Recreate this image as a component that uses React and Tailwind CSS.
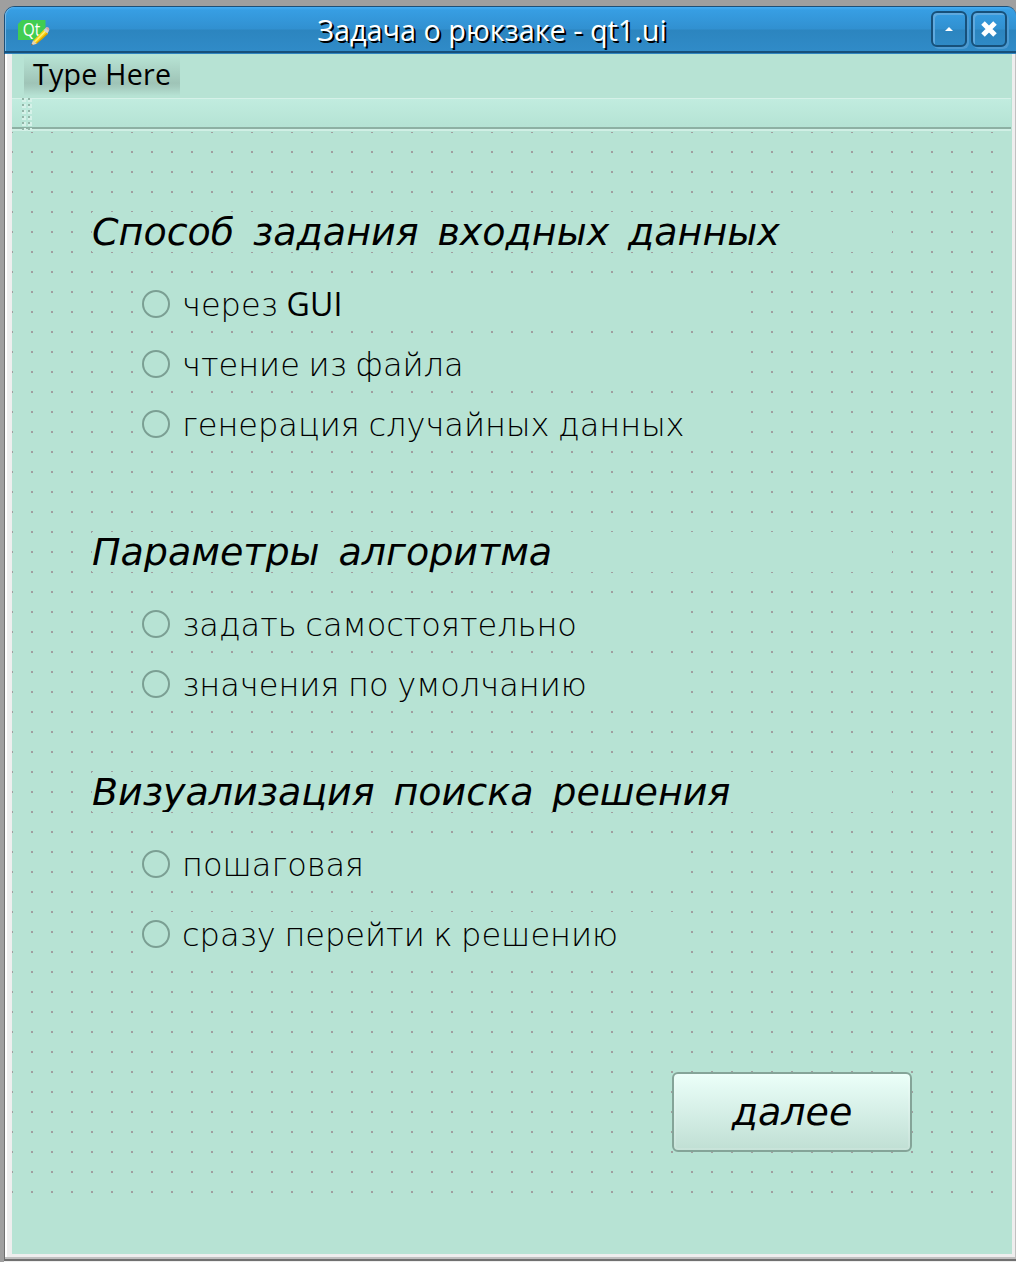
import React from "react";

const sections = [
  {
    title: "Способ задания входных данных",
    space: "mb-[86px]",
    options: [
      { label: "через ", latin: "GUI" },
      { label: "чтение из файла" },
      { label: "генерация случайных данных" },
    ],
    width: "w-[600px]",
    gap: "gap-4",
  },
  {
    title: "Параметры алгоритма",
    space: "mb-[66px]",
    options: [{ label: "задать самостоятельно" }, { label: "значения по умолчанию" }],
    width: "w-[540px]",
    gap: "gap-4",
  },
  {
    title: "Визуализация поиска решения",
    space: "mb-[116px]",
    options: [{ label: "пошаговая" }, { label: "сразу перейти к решению", shift: "-ml-px" }],
    width: "w-[540px]",
    gap: "gap-[26px]",
  },
];

function QtIcon() {
  return (
    <svg width="32" height="28" viewBox="0 0 32 28" className="block">
      <path d="M4 1H27.5V17L23.5 21H0V5Z" fill="#41cd52" />
      <text x="4.8" y="16.6" fontFamily="'Open Sans', sans-serif" fontSize="17.5" fontWeight="500" fill="#fff" textLength="17.5" lengthAdjust="spacingAndGlyphs">
        Qt
      </text>
      <path d="M15 22L26 10.5L30 14.5L18.5 24.5Z" fill="#f7d417" />
      <path d="M16 22.8L27 11.5L28 12.5L17 23.6Z" fill="#fff27a" />
      <path d="M17.6 24.4L29 13.8L30 14.8L18.6 25Z" fill="#e09b00" />
      <path d="M15 21.6L13 26.5L18.8 24.8Z" fill="#e9d3ae" />
      <path d="M13.7 24.7L13 26.5L14.9 26Z" fill="#444" />
      <path d="M25.6 11L28.4 8.2Q30.2 8 31 9.4Q31.6 10.8 30.9 12L29.4 14.6Z" fill="#cfcfcf" />
      <path d="M27.8 8.8Q30 7.6 31 9.4Q31.6 10.8 30.6 12Z" fill="#d9a3a3" />
    </svg>
  );
}

function TitleButton({ children }) {
  return (
    <button className="flex size-9 items-center justify-center rounded-md border-2 border-[#17507a] shadow-[2px_2px_0_#4c9ad2,inset_2px_2px_0_#5fa9de]">
      {children}
    </button>
  );
}

function Radio({ option }) {
  return (
    <label className="flex h-11 items-center bg-[#b7e3d4]">
      <span className="size-7 shrink-0 rounded-full border-2 border-[#7b9f93]" />
      <span
        className={`ml-3 h-11 whitespace-pre font-['DejaVu_Sans',sans-serif] text-[32px] font-extralight [word-spacing:-1.5px] ${option.latin ? "leading-11" : "leading-[46px]"} ${option.shift || ""}`}
      >
        {option.label}
        {option.latin && (
          <span className="font-['Open_Sans',sans-serif] font-normal tracking-[0.2px]">{option.latin}</span>
        )}
      </span>
    </label>
  );
}

export default function App() {
  return (
    <div className="flex h-[1262px] w-[1016px] flex-col overflow-hidden bg-[#9f9f9f] pt-1.5 pl-1 text-black">
      <header className="flex h-12 shrink-0 rounded-tl-[11px] rounded-tr-[9px] border-t border-l border-[#1d4f77] bg-[#2f84bf]">
        <div className="flex h-[46px] w-full items-center rounded-t-[9px] border-b-2 border-[#17507a] bg-[linear-gradient(#45aef5_0,#379ee3_3px,#3190d0_22px,#2c85bf_23px,#308bc8_100%)] pr-[9px] pl-[13px] shadow-[inset_1px_0_0_#7ab9e6]">
          <div className="pt-[7px]">
            <QtIcon />
          </div>
          <h1 className="flex-1 pt-px pl-[3px] text-center font-['Open_Sans',sans-serif] text-[28.8px] leading-10 font-medium whitespace-nowrap text-white [text-shadow:2px_2px_0_#000]">
            Задача о рюкзаке - qt1.ui
          </h1>
          <div className="flex gap-1">
            <TitleButton>
              <svg width="8" height="4" viewBox="0 0 8 4">
                <path d="M0 4L4 0L8 4Z" fill="#fff" />
              </svg>
            </TitleButton>
            <TitleButton>
              <svg width="16" height="16" viewBox="0 0 16 16">
                <path d="M2 2L14 14M14 2L2 14" stroke="#fff" strokeWidth="5" />
              </svg>
            </TitleButton>
          </div>
        </div>
      </header>

      <div className="flex h-[1207px] shrink-0 flex-col border-b-2 border-l border-[#707070] bg-[#c0c0c0] pr-px pb-0.5">
        <div className="flex h-[1203px] flex-col border-l-2 border-white bg-[#eeeeee] pr-[3px] pb-[3px] pl-[5px]">
          <main className="flex flex-1 flex-col bg-[#b7e3d4]">
            <nav className="flex h-11 shrink-0 pt-0.5 pl-3">
              <div className="h-10 w-[156px] bg-[linear-gradient(#b7e3d4_0%,#9fc4b7_68%,#a5cbbe_78%,#b7e3d4_100%)] pl-[9px] font-['Open_Sans',sans-serif] text-[28.6px] leading-9 font-medium tracking-[0.25px] whitespace-nowrap">
                Type Here
              </div>
            </nav>
            <div className="mr-px flex h-[33px] shrink-0 border-t border-[#d5f1e8] bg-[linear-gradient(#c1ecdf_0,#b5e3d4_28px,#8db0a3_28px,#8db0a3_30px,#d0efe5_30px)] pl-2.5">
              <div className="-mt-px h-[33px] w-3 bg-[conic-gradient(from_270deg_at_2px_2px,#93b5a8_90deg,transparent_0),conic-gradient(from_270deg_at_4px_4px,#d5f1e8_90deg,transparent_0)] [background-size:6px_6px]" />
            </div>
            <div className="mt-px mr-px flex h-[1079px] shrink-0 flex-col bg-[conic-gradient(from_270deg_at_2px_2px,#9f9f9f_90deg,transparent_0)] [background-position:-1px_-1px] [background-size:20px_20px] pt-20 pl-20">
              {sections.map((s) => (
                <section key={s.title} className={s.space}>
                  <h2 className="h-10 w-[800px] overflow-hidden bg-[#b7e3d4] font-['DejaVu_Sans',sans-serif] text-[38px] leading-10 font-normal whitespace-nowrap italic [word-spacing:6.8px]">
                    {s.title}
                  </h2>
                  <div className={`mt-[30px] ml-[50px] flex flex-col ${s.width} ${s.gap}`}>
                    {s.options.map((o) => (
                      <Radio key={o.label} option={o} />
                    ))}
                  </div>
                </section>
              ))}
              <button className="ml-[580px] h-20 w-60 shrink-0 rounded-md border-2 border-[#84a498] bg-[linear-gradient(#ebfff9,#c0dfd4)] font-['DejaVu_Sans',sans-serif] text-[38px] leading-[76px] italic shadow-[inset_0_0_0_2px_#ffffff22]">
                далее
              </button>
            </div>
          </main>
        </div>
      </div>
      <div className="h-px shrink-0 bg-[#eeeeee]" />
    </div>
  );
}
